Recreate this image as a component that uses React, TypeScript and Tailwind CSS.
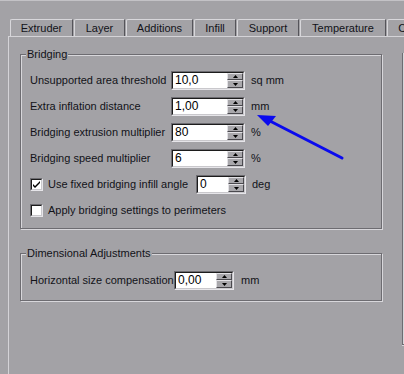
import React from "react";

const BG = "bg-[#a3a2a6]";

function Spin() {
  return (
    <div className="flex flex-col w-[16px] shrink-0">
      <div className="h-[7px] bg-[#a9a8ac] border-t border-l border-[#e2e1e5] border-r border-r-[#4a494e] border-b border-b-[#4a494e] flex items-center justify-center">
        <svg width="5" height="3" viewBox="0 0 5 3">
          <path d="M2.5 0 L5 3 L0 3 Z" fill="#000" />
        </svg>
      </div>
      <div className="h-[8px] bg-[#a9a8ac] border-t border-l border-[#e2e1e5] border-r border-r-[#4a494e] border-b border-b-[#4a494e] flex items-center justify-center">
        <svg width="5" height="3" viewBox="0 0 5 3">
          <path d="M0 0 L5 0 L2.5 3 Z" fill="#000" />
        </svg>
      </div>
    </div>
  );
}

function SpinInput({ value, width }: { value: string; width: string }) {
  return (
    <div
      className={`${width} h-[19px] shrink-0 border border-t-[#6d6c71] border-l-[#6d6c71] border-r-[#e6e5e9] border-b-[#e6e5e9]`}
    >
      <div className="h-full flex border border-t-[#1c1c1c] border-l-[#1c1c1c] border-r-[#c9c8cc] border-b-[#c9c8cc] bg-white">
        <div className="flex-1 pl-[2px] text-[12px] leading-[15px] text-black">
          {value}
        </div>
        <Spin />
      </div>
    </div>
  );
}

function Check({ checked }: { checked?: boolean }) {
  return (
    <div className="w-[13px] h-[13px] shrink-0 border border-t-[#6d6c71] border-l-[#6d6c71] border-r-[#e6e5e9] border-b-[#e6e5e9]">
      <div className="w-full h-full bg-white border border-t-[#1c1c1c] border-l-[#1c1c1c] border-r-[#c9c8cc] border-b-[#c9c8cc] flex items-center justify-center">
        {checked && (
          <svg width="7" height="7" viewBox="0 0 7 7">
            <path d="M0 3 L2 5 L7 0 L7 2 L2 7 L0 5 Z" fill="#000" />
          </svg>
        )}
      </div>
    </div>
  );
}

function Group({
  title,
  height,
  children,
}: {
  title: string;
  height: string;
  children: React.ReactNode;
}) {
  return (
    <div
      className={`w-[362px] ${height} border border-[#6d6c71] shadow-[1px_1px_0_#d8d7db,inset_1px_1px_0_#d8d7db]`}
    >
      <div className={`-mt-[7px] ml-[5px] w-fit px-[1px] leading-[13px] ${BG}`}>
        {title}
      </div>
      {children}
    </div>
  );
}

const tabs = [
  { label: "Extruder", w: "w-[63px]" },
  { label: "Layer", w: "w-[51px]" },
  { label: "Additions", w: "w-[67px]" },
  { label: "Infill", w: "w-[42px]" },
  { label: "Support", w: "w-[62px]" },
  { label: "Temperature", w: "w-[86px]" },
  { label: "Cooling", w: "w-[60px]" },
];

const rows = [
  { label: "Unsupported area threshold", value: "10,0", unit: "sq mm" },
  { label: "Extra inflation distance", value: "1,00", unit: "mm" },
  { label: "Bridging extrusion multiplier", value: "80", unit: "%" },
  { label: "Bridging speed multiplier", value: "6", unit: "%" },
];

export default function App() {
  return (
    <div
      className={`relative w-[404px] h-[374px] overflow-hidden ${BG} text-[11px] text-[#121218] font-['Liberation_Sans',Arial,sans-serif] flex flex-col`}
    >
      <div className="h-px bg-[#c3c2c6] shrink-0" />

      {/* tabs */}
      <div className="flex gap-[1px] ml-[10px] mt-[18px] h-[17px] shrink-0">
        {tabs.map((t) => (
          <div
            key={t.label}
            className={`${t.w} shrink-0 h-[17px] border-t border-l border-[#d8d7db] border-r border-r-[#55545a] rounded-tl-[2px] text-center leading-[15px] pt-[1px] whitespace-nowrap overflow-hidden`}
          >
            {t.label}
          </div>
        ))}
      </div>

      {/* panel */}
      <div className="ml-[8px] flex-1 border-t border-l border-[#d4d3d7] flex">
        <div className="ml-[11px] mt-[17px] flex flex-col">
          <Group title="Bridging" height="h-[175px]">
            <div className="mt-[10px] ml-[9px] flex flex-col gap-[7px]">
              {rows.map((r) => (
                <div key={r.label} className="flex items-center h-[19px]">
                  <div className="w-[141px] shrink-0">{r.label}</div>
                  <SpinInput value={r.value} width="w-[74px]" />
                  <div className="ml-[6px]">{r.unit}</div>
                </div>
              ))}
              <div className="flex items-center h-[19px]">
                <Check checked />
                <div className="ml-[5px] w-[148px] shrink-0">
                  Use fixed bridging infill angle
                </div>
                <SpinInput value="0" width="w-[50px]" />
                <div className="ml-[6px]">deg</div>
              </div>
              <div className="flex items-center h-[19px]">
                <Check />
                <div className="ml-[5px]">Apply bridging settings to perimeters</div>
              </div>
            </div>
          </Group>

          <div className="mt-[24px]">
            <Group title="Dimensional Adjustments" height="h-[48px]">
              <div className="mt-[11px] ml-[9px] flex items-center h-[19px]">
                <div className="w-[144px] shrink-0">Horizontal size compensation</div>
                <SpinInput value="0,00" width="w-[60px]" />
                <div className="ml-[7px]">mm</div>
              </div>
            </Group>
          </div>
        </div>

        <div className="ml-auto mt-[16px] w-[2px] h-[292px] border-l border-b border-[#6d6c71] shadow-[inset_1px_0_0_#d8d7db,0_1px_0_#d8d7db]" />
      </div>

      {/* annotation arrow */}
      <svg
        className="absolute left-0 top-0 pointer-events-none"
        width="404"
        height="374"
        viewBox="0 0 404 374"
      >
        <line
          x1="342"
          y1="158"
          x2="268"
          y2="120"
          stroke="#0a0aee"
          strokeWidth="3"
          strokeLinecap="round"
        />
        <path d="M257 115 L276 116 L268 126 Z" fill="#0a0aee" />
      </svg>
    </div>
  );
}
